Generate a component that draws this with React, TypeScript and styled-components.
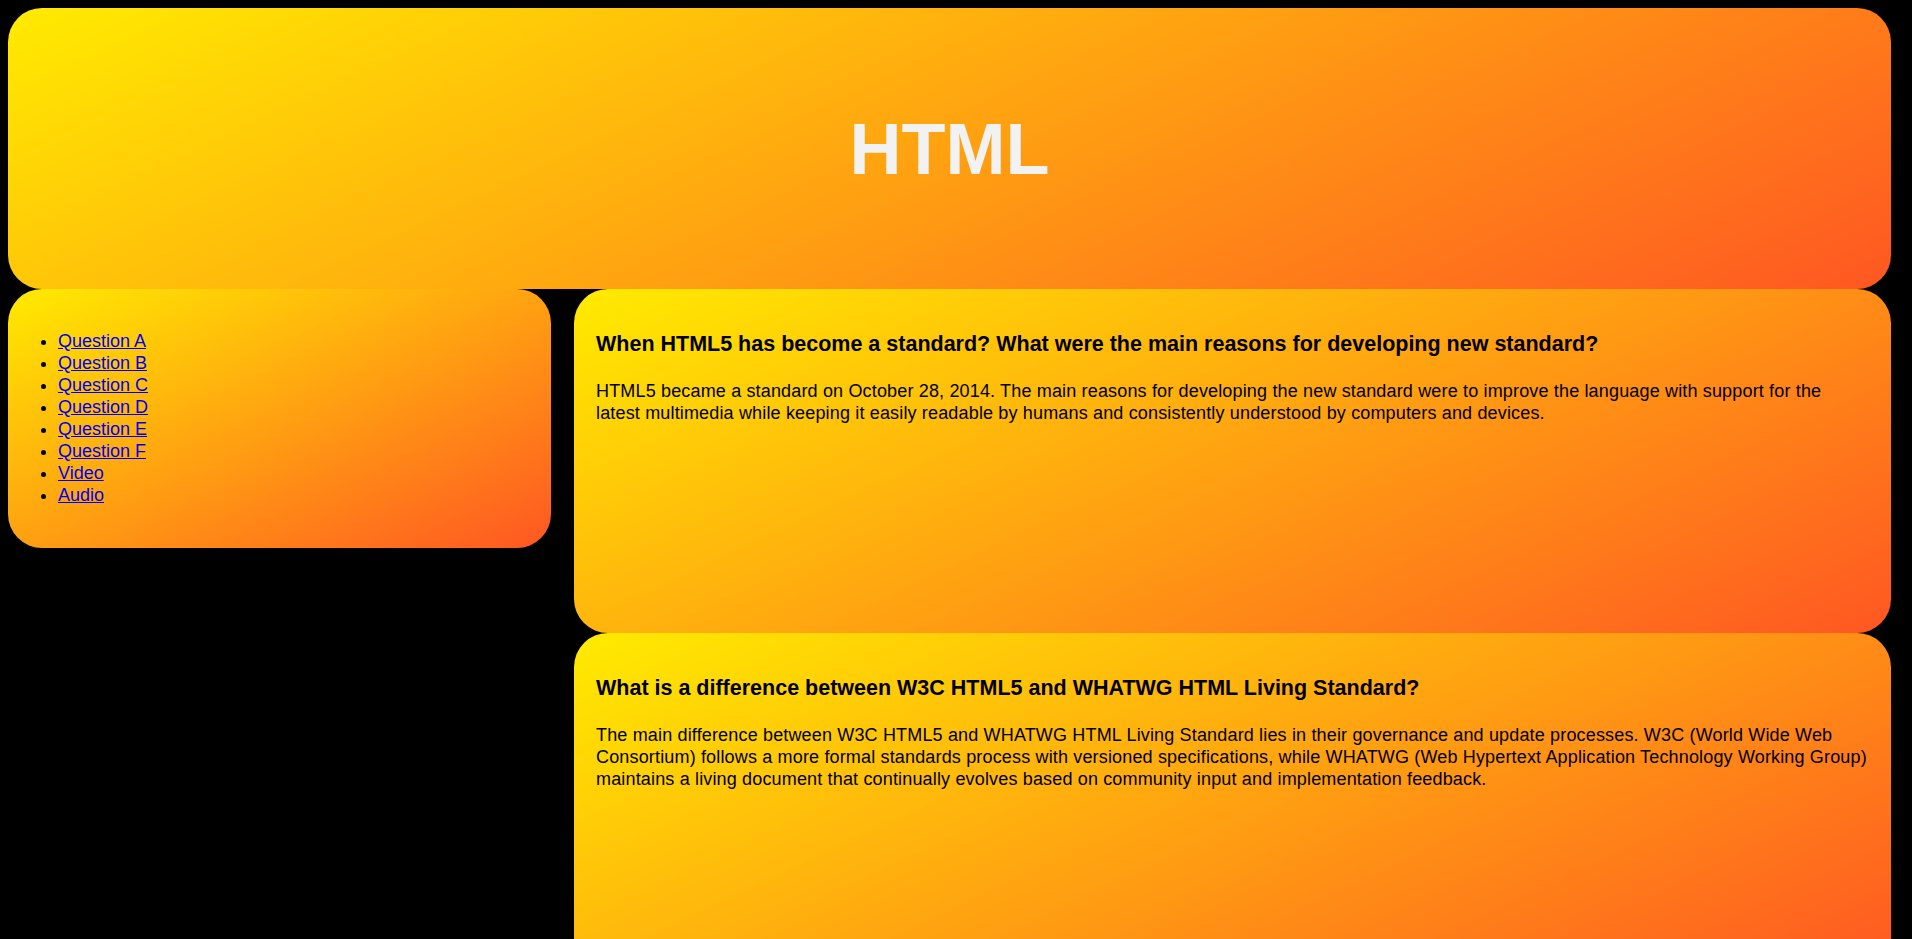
import React from "react";
import styled, { createGlobalStyle } from "styled-components";

const GlobalStyle = createGlobalStyle`
  html {
    background: #000;
  }
  body {
    margin: 8px 21px 8px 8px;
    background: #000;
    font-family: "Liberation Sans", Arial, sans-serif;
    font-size: 18px;
    color: #000;
  }
`;

const gradient = "linear-gradient(155deg, #ffeb00, #ff5722)";

const Header = styled.header`
  height: 281px;
  border-radius: 34px;
  background: ${gradient};
  display: flex;
  align-items: center;
  justify-content: center;
`;

const Title = styled.h1`
  margin: 0;
  font-size: 72px;
  font-weight: bold;
  color: #f2f2f2;
`;

const Layout = styled.div`
  display: grid;
  grid-template-columns: minmax(0, 543fr) minmax(0, 1317fr);
  column-gap: 23px;
  align-items: start;
`;

const Nav = styled.nav`
  border-radius: 34px;
  background: ${gradient};
  padding: 23px 10px 24px;
`;

const NavList = styled.ul`
  margin: 18px 0;
  padding-left: 40px;
  font-size: 18px;
  line-height: 22px;
`;

const NavLink = styled.a`
  color: #0000ee;
  text-decoration: underline;
`;

const Main = styled.main`
  display: flex;
  flex-direction: column;
`;

const Section = styled.section`
  box-sizing: border-box;
  height: 344px;
  border-radius: 34px;
  background: ${gradient};
  padding: 22px 22px;
`;

const Question = styled.h3`
  margin: 21px 0 23px;
  font-size: 21.5px;
  font-weight: bold;
`;

const Answer = styled.p`
  margin: 0;
  font-size: 18px;
  letter-spacing: 0.16px;
  line-height: 22px;
`;

const links = [
  ["Question A", "#qa"],
  ["Question B", "#qb"],
  ["Question C", "#qc"],
  ["Question D", "#qd"],
  ["Question E", "#qe"],
  ["Question F", "#qf"],
  ["Video", "#video"],
  ["Audio", "#audio"],
];

const sections = [
  {
    id: "qa",
    q: "When HTML5 has become a standard? What were the main reasons for developing new standard?",
    a: "HTML5 became a standard on October 28, 2014. The main reasons for developing the new standard were to improve the language with support for the latest multimedia while keeping it easily readable by humans and consistently understood by computers and devices.",
  },
  {
    id: "qb",
    q: "What is a difference between W3C HTML5 and WHATWG HTML Living Standard?",
    a: "The main difference between W3C HTML5 and WHATWG HTML Living Standard lies in their governance and update processes. W3C (World Wide Web Consortium) follows a more formal standards process with versioned specifications, while WHATWG (Web Hypertext Application Technology Working Group) maintains a living document that continually evolves based on community input and implementation feedback.",
  },
  {
    id: "qc",
    q: "What are the new semantic elements introduced in HTML5?",
    a: "HTML5 introduced semantic elements such as header, footer, nav, article, section, aside, main and figure, which describe the meaning of the content they contain and make documents easier to read for both people and machines.",
  },
  {
    id: "qd",
    q: "Which new form input types were added in HTML5?",
    a: "HTML5 added input types such as email, url, number, range, date, time, color, search and tel, along with attributes like placeholder, required and pattern for built-in validation.",
  },
  {
    id: "qe",
    q: "What is the purpose of the canvas element?",
    a: "The canvas element provides a drawing surface that can be scripted with JavaScript to render graphics, charts, animations and games directly in the browser without plugins.",
  },
  {
    id: "qf",
    q: "What are Web Storage APIs?",
    a: "Web Storage provides localStorage and sessionStorage, which allow web applications to store key-value data in the browser, offering more capacity and a simpler interface than cookies.",
  },
  {
    id: "video",
    q: "Video",
    a: "HTML5 introduced the video element, which allows embedding video content natively in web pages without third-party plugins.",
  },
  {
    id: "audio",
    q: "Audio",
    a: "HTML5 introduced the audio element, which allows embedding sound content natively in web pages without third-party plugins.",
  },
];

export default function App() {
  return (
    <>
      <GlobalStyle />
      <Header>
        <Title>HTML</Title>
      </Header>
      <Layout>
        <Nav>
          <NavList>
            {links.map(([label, href]) => (
              <li key={href}>
                <NavLink href={href}>{label}</NavLink>
              </li>
            ))}
          </NavList>
        </Nav>
        <Main>
          {sections.map((s) => (
            <Section key={s.id} id={s.id}>
              <Question>{s.q}</Question>
              <Answer>{s.a}</Answer>
            </Section>
          ))}
        </Main>
      </Layout>
    </>
  );
}
